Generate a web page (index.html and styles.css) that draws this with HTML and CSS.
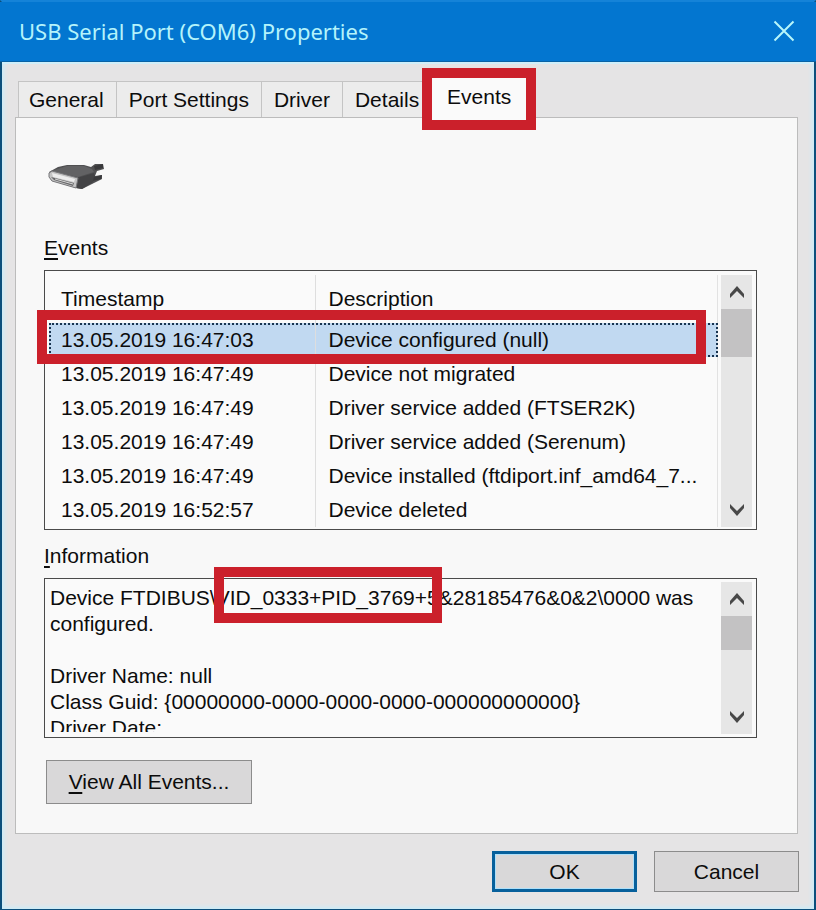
FILE: index.html
```
<!DOCTYPE html>
<html lang="en">
<head>
  <meta charset="UTF-8">
  <meta name="viewport" content="width=device-width, initial-scale=1.0">
  <title>USB Serial Port (COM6) Properties</title>
  <link rel="stylesheet" href="styles.css">
</head>
<body>
  <div class="window">
    <!-- title bar -->
    <header class="titlebar">
      <h1>USB Serial Port (COM6) Properties</h1>
      <button type="button" class="close" aria-label="Close">
        <svg width="22" height="22" viewBox="0 0 22 22"><path d="M1.5 1.5L20.5 20.5M20.5 1.5L1.5 20.5"/></svg>
      </button>
    </header>

    <!-- tabs -->
    <nav class="tabs" role="tablist">
      <button type="button" role="tab">General</button>
      <button type="button" role="tab">Port Settings</button>
      <button type="button" role="tab">Driver</button>
      <button type="button" role="tab">Details</button>
      <button type="button" role="tab" class="current" aria-selected="true">Events<span class="mark mark-tab"></span></button>
    </nav>

    <!-- events page -->
    <main class="panel">
      <svg class="device" width="58" height="32" viewBox="0 0 58 32">
        <path d="M1 10L10 5L19 3L36 3L43 5L47 2L55 2L56 7L49 9L47 14L54 13L54 17L46 21L34 27L28 26L3 18Z" fill="#505052"/>
        <path d="M3 9L19 4L36 4L44 7L46 10L30 15Z" fill="#626264"/>
        <path d="M29 16L46 11L47 14L45 20L34 27L28 26Z" fill="#434345"/>
        <path d="M1 11L4 9L30 16L28 26L4 19L1 15Z" fill="#c4c4c4"/>
        <path d="M4 11L27 17L26 20L5 15Z" fill="#ececec"/>
        <path d="M3 15L26 21L25 24L6 18Z" fill="#68686a"/>
        <path d="M7 17L25 22" stroke="#d8d8d8" fill="none"/>
        <path d="M1 11L4 9L30 16L28 26L4 19L1 15Z" fill="none" stroke="#77777a"/>
        <path d="M46 4L55 2L55 6L47 8ZM46 15L54 13L53 17L45 19Z" fill="#39393b"/>
      </svg>

      <h2 id="events-label"><u>E</u>vents</h2>
      <div class="box list">
        <table class="events" aria-labelledby="events-label">
          <thead>
            <tr><th>Timestamp</th><th>Description</th></tr>
          </thead>
          <tbody>
            <tr class="selected"><td>13.05.2019 16:47:03</td><td>Device configured (null)</td></tr>
            <tr><td>13.05.2019 16:47:49</td><td>Device not migrated</td></tr>
            <tr><td>13.05.2019 16:47:49</td><td>Driver service added (FTSER2K)</td></tr>
            <tr><td>13.05.2019 16:47:49</td><td>Driver service added (Serenum)</td></tr>
            <tr><td>13.05.2019 16:47:49</td><td>Device installed (ftdiport.inf_amd64_7...</td></tr>
            <tr><td>13.05.2019 16:52:57</td><td>Device deleted</td></tr>
          </tbody>
        </table>
        <div class="scroll">
          <button type="button" aria-label="Scroll up"><svg width="16" height="14" viewBox="0 0 16 14"><path d="M1 9L8 1L15 9V13L8 6L1 13Z"/></svg></button>
          <div class="track"><div class="thumb"></div></div>
          <button type="button" aria-label="Scroll down"><svg width="16" height="14" viewBox="0 0 16 14"><path d="M1 1L8 8L15 1V5L8 13L1 5Z"/></svg></button>
        </div>
        <span class="mark mark-row"></span>
      </div>

      <label for="info"><u>I</u>nformation</label>
      <div class="box info">
        <textarea id="info" readonly>Device FTDIBUS\VID_0333+PID_3769+5&amp;28185476&amp;0&amp;2\0000 was
configured.

Driver Name: null
Class Guid: {00000000-0000-0000-0000-000000000000}
Driver Date:</textarea>
        <div class="scroll">
          <button type="button" aria-label="Scroll up"><svg width="16" height="14" viewBox="0 0 16 14"><path d="M1 9L8 1L15 9V13L8 6L1 13Z"/></svg></button>
          <div class="track"><div class="thumb"></div></div>
          <button type="button" aria-label="Scroll down"><svg width="16" height="14" viewBox="0 0 16 14"><path d="M1 1L8 8L15 1V5L8 13L1 5Z"/></svg></button>
        </div>
        <span class="mark mark-id"></span>
      </div>

      <button type="button" class="btn view"><u>V</u>iew All Events...</button>
    </main>

    <footer class="actions">
      <button type="button" class="btn default">OK</button>
      <button type="button" class="btn">Cancel</button>
    </footer>
  </div>
</body>
</html>
```
FILE: styles.css
```
* {
  margin: 0;
  padding: 0;
  box-sizing: border-box;
}
body {
  font: 21px/26px "Liberation Sans", Arial, sans-serif;
  color: #0c0c0c;
}
button,
textarea {
  font: inherit;
  color: inherit;
  border: 0;
  background: none;
}
u {
  text-decoration-thickness: 2px;
  text-underline-offset: 3px;
}
.window {
  display: flex;
  flex-direction: column;
  min-height: 100vh;
  border: 2px solid #0b4f7c;
  border-top-color: #1583d8;
  background-color: #e5e4e5;
  box-shadow: inset 0 0 4px 2px #c9ecfa;
}

/* title bar */
.titlebar {
  display: flex;
  align-items: center;
  justify-content: space-between;
  height: 60px;
  margin: 0 -2px;
  padding: 0 21px 2px 19px;
  background-color: #0376d0;
  border-bottom: 1px solid #0862a5;
}
.titlebar h1 {
  font: 22px/30px "Noto Sans", "Open Sans", sans-serif;
  color: #b4f3fb;
}
.close {
  display: flex;
}
.close svg {
  fill: none;
  stroke: #b8f6fa;
  stroke-width: 2;
}

/* tabs */
.tabs {
  display: flex;
  align-items: flex-end;
  height: 55px;
  padding-left: 16px;
  border-top: 2px solid #d0effa;
}
.tabs button {
  height: 36px;
  padding: 0 12px;
  border: 1px solid #c4c4c4;
  border-bottom: 0;
  border-left-width: 0;
  background-color: #ececec;
}
.tabs button:first-child {
  padding-left: 10px;
  border-left-width: 1px;
}
.tabs .current {
  position: relative;
  z-index: 1;
  width: 94px;
  height: 42px;
  margin-bottom: -3px;
  padding-bottom: 4px;
  border: 0;
  background-color: #fafafa;
}

/* page */
.panel {
  flex: 1;
  display: flex;
  flex-direction: column;
  margin: 0 16px 0 13px;
  padding: 44px 40px 29px 28px;
  border: 1px solid #bcbcbc;
  background-color: #f8f8f8;
}
.device {
  margin: 0 0 41px 4px;
}
.panel h2,
.panel label {
  font-size: 21px;
  font-weight: normal;
  line-height: 26px;
  margin-bottom: 9px;
}
.box {
  position: relative;
  display: grid;
  grid-template-columns: 1fr 31px;
  border: 1px solid #4a4a4a;
  background-color: #fafafa;
}
.list {
  column-gap: 3px;
  padding: 4px 4px 2px;
  margin-bottom: 13px;
}
.events {
  width: 100%;
  table-layout: fixed;
  border-collapse: collapse;
  border-right: 1px solid #e2e2e2;
}
.events th,
.events td {
  height: 34px;
  padding-left: 13px;
  font-weight: normal;
  text-align: left;
  white-space: nowrap;
}
.events th {
  height: 48px;
}
.events th:first-child,
.events td:first-child {
  width: 266px;
  padding-left: 12px;
  border-right: 1px solid #dedede;
}
.events .selected {
  background-color: #c1d9f1;
  outline: 2px dotted #183450;
  outline-offset: -2px;
}

/* scroll bars */
.scroll {
  display: flex;
  flex-direction: column;
  background-color: #e6e6e6;
}
.scroll button {
  display: flex;
  align-items: center;
  justify-content: center;
  height: 34px;
}
.scroll svg {
  fill: #484848;
}
.track {
  flex: 1;
}
.thumb {
  height: 48px;
  background-color: #c3c2c3;
}
.info .thumb {
  height: 34px;
}

/* information */
.info {
  height: 160px;
  padding: 3px 4px 3px 5px;
  margin-bottom: 22px;
}
.info textarea {
  height: 150px;
  padding-top: 3px;
  overflow: hidden;
  resize: none;
  white-space: pre;
  outline: 0;
}

/* buttons */
.btn {
  width: 145px;
  height: 41px;
  border: 1px solid #8c8c8c;
  background-color: #d9d8d9;
}
.view {
  width: 206px;
  height: 44px;
  margin-left: 2px;
}
.default {
  border: 3px solid #07609c;
  box-shadow: inset 0 0 0 1px #aee0fa;
}
.actions {
  display: flex;
  justify-content: flex-end;
  gap: 17px;
  padding: 17px 15px;
}

/* red frames */
.mark {
  position: absolute;
  border: 10px solid #cb202b;
  pointer-events: none;
}
.mark-tab {
  inset: -10px;
}
.mark-row {
  top: 39px;
  left: -8px;
  right: 50px;
  height: 54px;
}
.mark-id {
  top: -12px;
  left: 169px;
  width: 228px;
  height: 56px;
}
```
